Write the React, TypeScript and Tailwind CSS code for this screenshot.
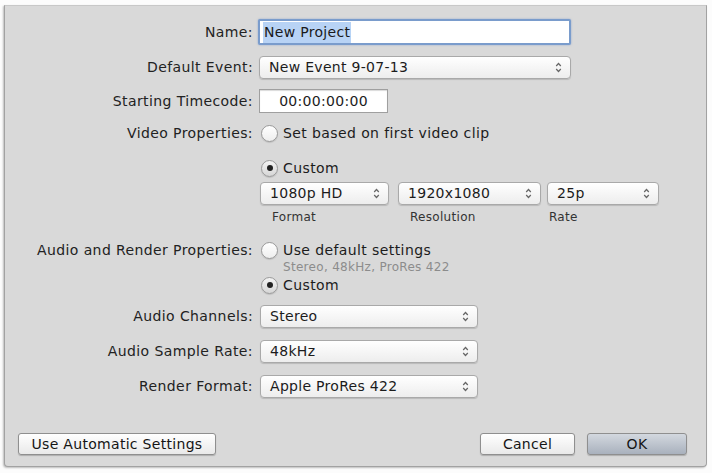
import type { ReactNode } from "react";

const font = { fontFamily: '"DejaVu Sans", "Noto Sans", sans-serif' };

function Arrows() {
  return (
    <svg width="7" height="11" viewBox="0 0 7 11" className="shrink-0">
      <path d="M1.2 4 L3.5 1.5 L5.8 4" fill="none" stroke="#666" strokeWidth="1.2" />
      <path d="M1.2 7 L3.5 9.5 L5.8 7" fill="none" stroke="#666" strokeWidth="1.2" />
    </svg>
  );
}

function Select({ value, className }: { value: string; className: string }) {
  return (
    <div
      className={`flex h-[23px] items-center justify-between rounded-[4px] border border-[#a9a9a9] bg-gradient-to-b from-white to-[#ededed] pl-[9px] pr-[8px] text-[14px] tracking-[0.3px] text-[#1c1c1c] shadow-[0_1px_1px_rgba(0,0,0,0.15)] ${className}`}
    >
      <span>{value}</span>
      <Arrows />
    </div>
  );
}

function Radio({ checked, children }: { checked?: boolean; children: ReactNode }) {
  return (
    <div className="ml-[2px] flex h-[18px] items-center gap-[5px] text-[14px] tracking-[0.4px] text-[#1c1c1c]">
      <div
        className={`flex h-[17px] w-[17px] items-center justify-center rounded-full border border-[#9a9a9a] shadow-[0_1px_1px_rgba(0,0,0,0.12)] ${
          checked ? "bg-gradient-to-b from-[#f4f4f4] to-[#d6d6d6]" : "bg-gradient-to-b from-white to-[#eeeeee]"
        }`}
      >
        {checked && <div className="h-[6px] w-[6px] rounded-full bg-[#222]" />}
      </div>
      <span>{children}</span>
    </div>
  );
}

function Row({ label, children, className = "" }: { label?: string; children: ReactNode; className?: string }) {
  return (
    <div className={`flex items-center ${className}`}>
      <div className="w-[248px] whitespace-nowrap text-right text-[14px] tracking-[0.4px] text-[#222]">{label}</div>
      <div className="ml-[6px] flex items-center">{children}</div>
    </div>
  );
}

function Button({ children, className }: { children: ReactNode; className: string }) {
  return (
    <div
      className={`flex h-[22px] items-center justify-center rounded-[3px] border border-[#8f8f8f] text-[14px] tracking-[0.3px] text-[#151515] shadow-[0_1px_1px_rgba(0,0,0,0.2)] ${className}`}
    >
      {children}
    </div>
  );
}

export default function App() {
  return (
    <div className="h-[473px] w-[712px] overflow-hidden bg-[#fcfcfc]" style={font}>
      <div className="ml-[4px] mt-[5px] flex h-[462px] w-[703px] flex-col rounded-b-[4px] border border-[#a2a2a2] border-t-[#c8c8c8] bg-[#d9d9d9] shadow-[-1px_1px_2px_rgba(0,0,0,0.25)]">
        {/* Name */}
        <Row label="Name:" className="mt-[13px] h-[26px]">
          <div className="-ml-[1px] flex h-[26px] w-[313px] items-center rounded-[2px] border-2 border-[#7a9ccc] bg-white pl-[3px] text-[14px] tracking-[0.3px] text-[#1a1a1a] shadow-[0_0_2px_rgba(90,130,200,0.6)]">
            <span className="bg-[#b8d3f5] px-[1px]">New Project</span>
          </div>
        </Row>

        <Row label="Default Event:" className="mt-[11px]">
          <Select value="New Event 9-07-13" className="w-[312px]" />
        </Row>

        <Row label="Starting Timecode:" className="mt-[10px]">
          <div className="flex h-[24px] w-[129px] items-center justify-center border border-[#9f9f9f] bg-white text-[14px] tracking-[0.3px] text-[#1c1c1c] shadow-[inset_0_1px_1px_rgba(0,0,0,0.15)]">
            00:00:00:00
          </div>
        </Row>

        <Row label="Video Properties:" className="mt-[11px] h-[18px]">
          <Radio>Set based on first video clip</Radio>
        </Row>

        <Row className="mt-[17px] h-[18px]">
          <Radio checked>Custom</Radio>
        </Row>

        <Row className="mt-[5px]">
          <Select value="1080p HD" className="ml-[1px] w-[129px]" />
          <Select value="1920x1080" className="ml-[9px] w-[143px]" />
          <Select value="25p" className="ml-[6px] w-[112px]" />
        </Row>

        <Row className="mt-[5px] h-[14px]">
          <div className="flex text-[12px] tracking-[0.3px] text-[#333]">
            <span className="ml-[13px] w-[138px]">Format</span>
            <span className="w-[139px]">Resolution</span>
            <span>Rate</span>
          </div>
        </Row>

        <Row label="Audio and Render Properties:" className="mt-[17px] h-[18px]">
          <Radio>Use default settings</Radio>
        </Row>

        <Row className="mt-[2px] h-[13px]">
          <span className="ml-[24px] text-[12px] leading-[13px] tracking-[0.3px] text-[#8c8c8c]">Stereo, 48kHz, ProRes 422</span>
        </Row>

        <Row className="mt-[2px] h-[18px]">
          <Radio checked>Custom</Radio>
        </Row>

        <Row label="Audio Channels:" className="mt-[11px]">
          <Select value="Stereo" className="ml-[1px] w-[218px]" />
        </Row>

        <Row label="Audio Sample Rate:" className="mt-[12px]">
          <Select value="48kHz" className="ml-[1px] w-[218px]" />
        </Row>

        <Row label="Render Format:" className="mt-[12px]">
          <Select value="Apple ProRes 422" className="ml-[1px] w-[218px]" />
        </Row>

        {/* Buttons */}
        <div className="mt-auto mb-[11px] flex items-center pl-[13px] pr-[19px]">
          <Button className="w-[198px] bg-gradient-to-b from-white to-[#e9e9e9]">Use Automatic Settings</Button>
          <div className="flex-1" />
          <Button className="w-[95px] bg-gradient-to-b from-white to-[#e9e9e9]">Cancel</Button>
          <Button className="ml-[12px] w-[100px] border-[#7f8690] bg-gradient-to-b from-[#d3d8df] to-[#a9b1bd]">OK</Button>
        </div>
      </div>
    </div>
  );
}
